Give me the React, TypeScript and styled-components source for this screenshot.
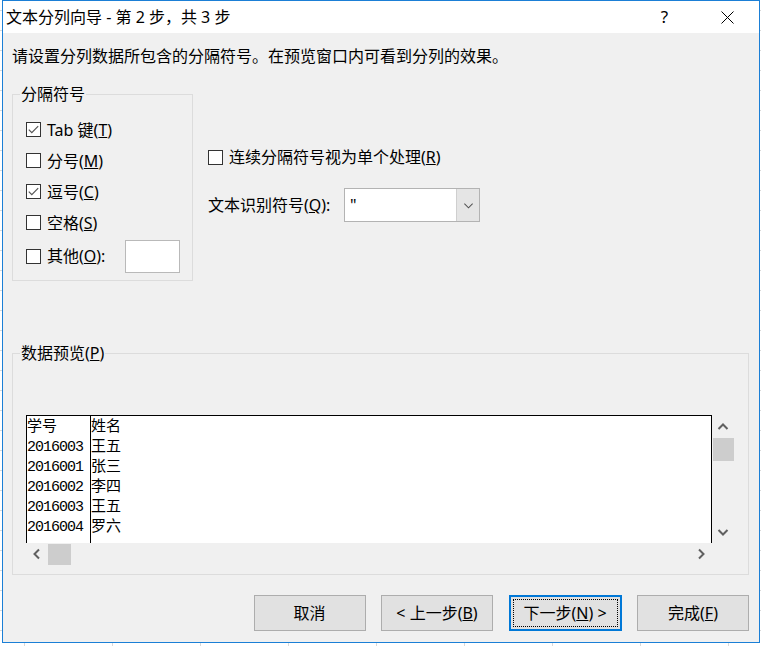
import React from 'react';
import styled, { createGlobalStyle } from 'styled-components';

const GlobalStyle = createGlobalStyle`
  html, body { margin: 0; padding: 0; }
  body {
    width: 761px;
    height: 646px;
    overflow: hidden;
    background-color: #ffffff;
    background-image: linear-gradient(#d9d9d9 1px, transparent 1px), linear-gradient(90deg, #d9d9d9 1px, transparent 1px);
    background-size: 100% 20px, 88px 100%;
    background-position: 0 10px, 24px 0;
    font-family: "Noto Sans", "Noto Sans CJK SC", sans-serif;
    color: #000;
  }
`;

const Dialog = styled.div`
  margin-left: 2px;
  width: 758px;
  height: 643px;
  box-sizing: border-box;
  border: 1px solid #1b7fd6;
  background: #f0f0f0;
  display: flex;
  flex-direction: column;
`;

const TitleBar = styled.div`
  height: 32px;
  flex: 0 0 32px;
  background: #ffffff;
  display: flex;
  align-items: center;
  padding-left: 3px;
`;

const TitleText = styled.div`
  flex: 1;
  font-size: 16px;
  line-height: 20px;
  white-space: nowrap;
`;

const CaptionButton = styled.div`
  width: 63px;
  height: 32px;
  display: flex;
  align-items: center;
  justify-content: center;
  font-size: 17px;
  line-height: 20px;
`;

const Content = styled.div`
  flex: 1;
  display: flex;
  flex-direction: column;
  padding: 0 10px 0 9px;
`;

const Instruction = styled.div`
  margin-top: 13px;
  font-size: 16px;
  line-height: 20px;
  white-space: nowrap;
`;

const TopRow = styled.div`
  display: flex;
  margin-top: 18px;
`;

const Group = styled.fieldset<{ $width: number }>`
  margin: 0;
  padding: 0;
  min-width: 0;
  width: ${(p) => p.$width}px;
  box-sizing: border-box;
  border: 1px solid #dcdcdc;
`;

const Legend = styled.legend`
  margin-left: 7px;
  padding: 0 1px;
  font-size: 16px;
  line-height: 20px;
`;

const DelimList = styled.div`
  display: flex;
  flex-direction: column;
  padding: 10px 12px 6px 13px;
`;

const CheckRow = styled.div<{ $h?: number }>`
  display: flex;
  align-items: center;
  gap: 6px;
  height: ${(p) => p.$h ?? 31}px;
  font-size: 16px;
  line-height: 20px;
  white-space: nowrap;
`;

const Box = styled.span<{ $size: number }>`
  width: ${(p) => p.$size}px;
  height: ${(p) => p.$size}px;
  flex: 0 0 ${(p) => p.$size}px;
  box-sizing: border-box;
  border: 1px solid #333333;
  background: #ffffff;
  display: flex;
  align-items: center;
  justify-content: center;
`;

const SmallInput = styled.div`
  margin-left: auto;
  width: 55px;
  height: 33px;
  box-sizing: border-box;
  background: #ffffff;
  border: 1px solid #b9b9b9;
`;

const RightCol = styled.div`
  display: flex;
  flex-direction: column;
  margin-left: 15px;
  padding-top: 63px;
`;

const QualifierRow = styled.div`
  display: flex;
  align-items: center;
  margin-top: 21px;
  font-size: 16px;
  line-height: 20px;
`;

const QualifierLabel = styled.span`
  width: 136px;
  white-space: nowrap;
`;

const Combo = styled.div`
  width: 136px;
  height: 34px;
  box-sizing: border-box;
  border: 1px solid #b3b3b3;
  background: #ffffff;
  display: flex;
`;

const ComboValue = styled.div`
  flex: 1;
  padding-left: 5px;
  display: flex;
  align-items: center;
  font-size: 16px;
`;

const ComboButton = styled.div`
  width: 22px;
  background: #e5e5e5;
  border-left: 1px solid #cfcfcf;
  display: flex;
  align-items: center;
  justify-content: center;
`;

const PreviewGroup = styled(Group)`
  margin-top: 62px;
`;

const PreviewInner = styled.div`
  padding: 52px 0 9px 13px;
`;

const TableFrame = styled.div`
  display: grid;
  grid-template-columns: 686px 22px;
  grid-template-rows: 128px 22px;
  width: 708px;
`;

const DataArea = styled.div`
  background: #ffffff;
  border: 1px solid #000000;
  border-bottom: none;
  display: flex;
  overflow: hidden;
  font-family: "Liberation Mono", "Noto Sans CJK SC", monospace;
  line-height: 20px;
`;

const DataCol = styled.div<{ $w?: number; $line?: boolean }>`
  display: flex;
  flex-direction: column;
  padding-top: 2px;
  box-sizing: border-box;
  ${(p) => (p.$w ? `width: ${p.$w}px; flex: 0 0 ${p.$w}px;` : 'flex: 1;')}
  ${(p) => (p.$line ? 'border-right: 1px solid #000;' : '')}
`;

const DataCell = styled.div<{ $cjk?: boolean }>`
  height: 20px;
  white-space: nowrap;
  font-size: 15px;
  letter-spacing: ${(p) => (p.$cjk ? '0' : '-1px')};
`;

const VScroll = styled.div`
  display: flex;
  flex-direction: column;
  background: #f0f0f0;
`;

const ArrowCell = styled.div<{ $w: number; $h: number }>`
  width: ${(p) => p.$w}px;
  height: ${(p) => p.$h}px;
  flex: 0 0 auto;
  display: flex;
  align-items: center;
  justify-content: center;
`;

const VThumb = styled.div`
  margin-left: 1px;
  width: 21px;
  height: 23px;
  background: #cdcdcd;
`;

const Spacer = styled.div`
  flex: 1;
`;

const HScroll = styled.div`
  display: flex;
  background: #f0f0f0;
`;

const HThumb = styled.div`
  width: 23px;
  height: 21px;
  margin-top: 1px;
  background: #cdcdcd;
`;

const ButtonRow = styled.div`
  display: flex;
  justify-content: flex-end;
  gap: 15.5px;
  margin-top: 20px;
`;

const Button = styled.div<{ $focused?: boolean }>`
  width: 112px;
  height: 36px;
  box-sizing: border-box;
  display: flex;
  align-items: center;
  justify-content: center;
  background: #e1e1e1;
  border: ${(p) => (p.$focused ? '2px solid #0078d7' : '1px solid #adadad')};
  ${(p) => (p.$focused ? 'outline: 1px dotted #000; outline-offset: -5px; width: 113px;' : '')}
  font-size: 16px;
  line-height: 20px;
  white-space: nowrap;
`;

const CheckMark = () => (
  <svg width="11" height="9" viewBox="0 0 11 9">
    <polyline points="0.8,4.6 3.8,7.6 10.2,1.2" fill="none" stroke="#555" strokeWidth="1.2" />
  </svg>
);

const Check: React.FC<{ checked?: boolean; size?: number }> = ({ checked, size = 15 }) => (
  <Box $size={size}>{checked ? <CheckMark /> : null}</Box>
);

const Chevron: React.FC<{ dir: 'up' | 'down' | 'left' | 'right'; color?: string; size?: number; sw?: number }> = ({
  dir,
  color = '#606060',
  size = 12,
  sw = 2,
}) => {
  const rot = { up: 0, right: 90, down: 180, left: 270 }[dir];
  return (
    <svg width={size} height={size} viewBox="0 0 12 12">
      <polyline
        points="1.5,8 6,3.5 10.5,8"
        fill="none"
        stroke={color}
        strokeWidth={sw}
        transform={`rotate(${rot} 6 6)`}
      />
    </svg>
  );
};

const rows: [string, string][] = [
  ['学号', '姓名'],
  ['2016003', '王五'],
  ['2016001', '张三'],
  ['2016002', '李四'],
  ['2016003', '王五'],
  ['2016004', '罗六'],
];

export default function App() {
  return (
    <>
      <GlobalStyle />
      <Dialog>
        <TitleBar>
          <TitleText>文本分列向导 - 第 2 步，共 3 步</TitleText>
          <CaptionButton>?</CaptionButton>
          <CaptionButton>
            <svg width="13" height="13" viewBox="0 0 13 13">
              <path d="M0.5 0.5 L12.5 12.5 M12.5 0.5 L0.5 12.5" stroke="#000" strokeWidth="1" fill="none" />
            </svg>
          </CaptionButton>
        </TitleBar>
        <Content>
          <Instruction>请设置分列数据所包含的分隔符号。在预览窗口内可看到分列的效果。</Instruction>
          <TopRow>
            <Group $width={181}>
              <Legend>分隔符号</Legend>
              <DelimList>
                <CheckRow>
                  <Check checked />
                  <span>
                    Tab 键(<u>T</u>)
                  </span>
                </CheckRow>
                <CheckRow>
                  <Check />
                  <span>
                    分号(<u>M</u>)
                  </span>
                </CheckRow>
                <CheckRow>
                  <Check checked />
                  <span>
                    逗号(<u>C</u>)
                  </span>
                </CheckRow>
                <CheckRow>
                  <Check />
                  <span>
                    空格(<u>S</u>)
                  </span>
                </CheckRow>
                <CheckRow $h={36}>
                  <Check />
                  <span>
                    其他(<u>O</u>):
                  </span>
                  <SmallInput />
                </CheckRow>
              </DelimList>
            </Group>
            <RightCol>
              <CheckRow $h={20}>
                <Check size={15} />
                <span>
                  连续分隔符号视为单个处理(<u>R</u>)
                </span>
              </CheckRow>
              <QualifierRow>
                <QualifierLabel>
                  文本识别符号(<u>Q</u>):
                </QualifierLabel>
                <Combo>
                  <ComboValue>"</ComboValue>
                  <ComboButton>
                    <Chevron dir="down" color="#505050" size={11} sw={1.1} />
                  </ComboButton>
                </Combo>
              </QualifierRow>
            </RightCol>
          </TopRow>
          <PreviewGroup $width={737}>
            <Legend>
              数据预览(<u>P</u>)
            </Legend>
            <PreviewInner>
              <TableFrame>
                <DataArea>
                  <DataCol $w={64} $line>
                    {rows.map((r, i) => (
                      <DataCell key={i} $cjk={i === 0}>
                        {r[0]}
                      </DataCell>
                    ))}
                  </DataCol>
                  <DataCol>
                    {rows.map((r, i) => (
                      <DataCell key={i} $cjk>
                        {r[1]}
                      </DataCell>
                    ))}
                  </DataCol>
                </DataArea>
                <VScroll>
                  <ArrowCell $w={22} $h={23}>
                    <Chevron dir="up" />
                  </ArrowCell>
                  <VThumb />
                  <Spacer />
                  <ArrowCell $w={22} $h={23}>
                    <Chevron dir="down" />
                  </ArrowCell>
                </VScroll>
                <HScroll>
                  <ArrowCell $w={22} $h={22}>
                    <Chevron dir="left" />
                  </ArrowCell>
                  <HThumb />
                  <Spacer />
                  <ArrowCell $w={22} $h={22}>
                    <Chevron dir="right" />
                  </ArrowCell>
                </HScroll>
                <div />
              </TableFrame>
            </PreviewInner>
          </PreviewGroup>
          <ButtonRow>
            <Button>取消</Button>
            <Button>
              &lt; 上一步(<u>B</u>)
            </Button>
            <Button $focused>
              下一步(<u>N</u>) &gt;
            </Button>
            <Button>
              完成(<u>F</u>)
            </Button>
          </ButtonRow>
        </Content>
      </Dialog>
    </>
  );
}
